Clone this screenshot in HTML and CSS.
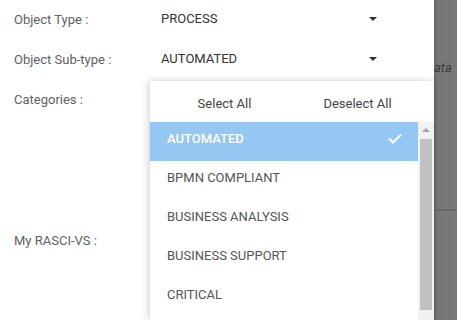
FILE: index.html
```html
<!DOCTYPE html>
<html>
<head>
<meta charset="utf-8">
<link rel="stylesheet" href="styles.css">
</head>
<body>
<div class="screen">
  <div class="panel">
    <div class="row">
      <div class="label">Object Type :</div>
      <div class="select"><span>PROCESS</span><span class="caret"></span></div>
    </div>
    <div class="row">
      <div class="label">Object Sub-type :</div>
      <div class="select"><span>AUTOMATED</span><span class="caret"></span></div>
    </div>
    <div class="row tall">
      <div class="label">Categories :</div>
    </div>
    <div class="row">
      <div class="label">My RASCI-VS :</div>
    </div>

    <div class="dropdown">
      <div class="dd-head">
        <span class="dd-btn">Select All</span>
        <span class="dd-btn">Deselect All</span>
      </div>
      <div class="dd-body">
        <ul class="dd-list">
          <li class="dd-item selected"><span>AUTOMATED</span>
            <svg class="check" width="14" height="11" viewBox="0 0 14 11"><path d="M1 5.5 L5 9.5 L13 1.5" fill="none" stroke="#fff" stroke-width="2"/></svg>
          </li>
          <li class="dd-item"><span>BPMN COMPLIANT</span></li>
          <li class="dd-item"><span>BUSINESS ANALYSIS</span></li>
          <li class="dd-item"><span>BUSINESS SUPPORT</span></li>
          <li class="dd-item"><span>CRITICAL</span></li>
        </ul>
        <div class="scrollbar">
          <div class="sb-arrow"></div>
          <div class="sb-thumb"></div>
        </div>
      </div>
    </div>
  </div>
  <div class="overlay">
    <div class="ov-top"><span class="ghost">ata</span><span class="ghost-o">:</span></div>
    <div class="ov-bottom"></div>
  </div>
</div>
</body>
</html>
```

FILE: styles.css
```css
* { box-sizing: border-box; }
html, body { margin: 0; padding: 0; }
body {
  width: 457px;
  height: 320px;
  overflow: hidden;
  font-family: Roboto, "Liberation Sans", sans-serif;
  font-size: 13px;
  background: #fff;
}
.screen {
  display: flex;
  width: 457px;
  height: 320px;
}
.panel {
  position: relative;
  width: 434px;
  height: 320px;
  background: #fff;
}
.row {
  display: flex;
  align-items: flex-start;
  height: 40px;
  padding-top: 12px;
}
.row.tall { height: 141px; }
.label {
  width: 161px;
  padding-left: 14px;
  color: #616161;
  line-height: 15px;
}
.select {
  display: flex;
  align-items: center;
  justify-content: space-between;
  width: 216px;
  color: #333;
  line-height: 15px;
  margin-top: -1px;
}
.caret {
  width: 0;
  height: 0;
  border-left: 4px solid transparent;
  border-right: 4px solid transparent;
  border-top: 4px solid #333;
}
.dropdown {
  position: absolute;
  left: 150px;
  top: 81px;
  width: 284px;
  height: 239px;
  background: #fff;
  box-shadow: -3px 0 8px rgba(0,0,0,0.12), 0 -1px 4px rgba(0,0,0,0.08);
  display: flex;
  flex-direction: column;
}
.dd-head {
  display: flex;
  height: 41px;
  align-items: center;
  padding-left: 8px;
  color: #444;
}
.dd-btn {
  width: 133px;
  text-align: center;
  line-height: 15px;
  padding-top: 3px;
}
.dd-body {
  flex: 1;
  display: flex;
  min-height: 0;
}
.dd-list {
  list-style: none;
  margin: 0;
  padding: 0;
  flex: 1;
}
.dd-item {
  display: flex;
  align-items: flex-start;
  justify-content: space-between;
  height: 39px;
  padding: 9px 16px 0 17px;
  line-height: 15px;
  color: #555;
}
.dd-item.selected {
  background: #94c7f2;
  color: #fff;
  font-weight: 500;
}
.check { margin-top: 2px; }
.scrollbar {
  width: 16px;
  background: #f1f1f1;
  display: flex;
  flex-direction: column;
  align-items: center;
}
.sb-arrow {
  margin-top: 6px;
  width: 0;
  height: 0;
  border-left: 4px solid transparent;
  border-right: 4px solid transparent;
  border-bottom: 4px solid #a3a3a3;
}
.sb-thumb {
  margin-top: 7px;
  width: 12px;
  height: 171px;
  background: #c1c1c1;
}
.overlay {
  flex: 1;
  display: flex;
  flex-direction: column;
  background: linear-gradient(to right, #666 0, #777 4px, #797979 100%);
}
.ov-top {
  height: 211px;
  border-bottom: 2px solid #666;
  padding-top: 60px;
  font-style: italic;
  font-size: 13px;
  line-height: 15px;
  white-space: nowrap;
  overflow: hidden;
}
.ghost { color: #3a3a3a; }
.ghost-o { color: #8a6a2a; margin-left: 1px; }
.ov-bottom { flex: 1; }
```
